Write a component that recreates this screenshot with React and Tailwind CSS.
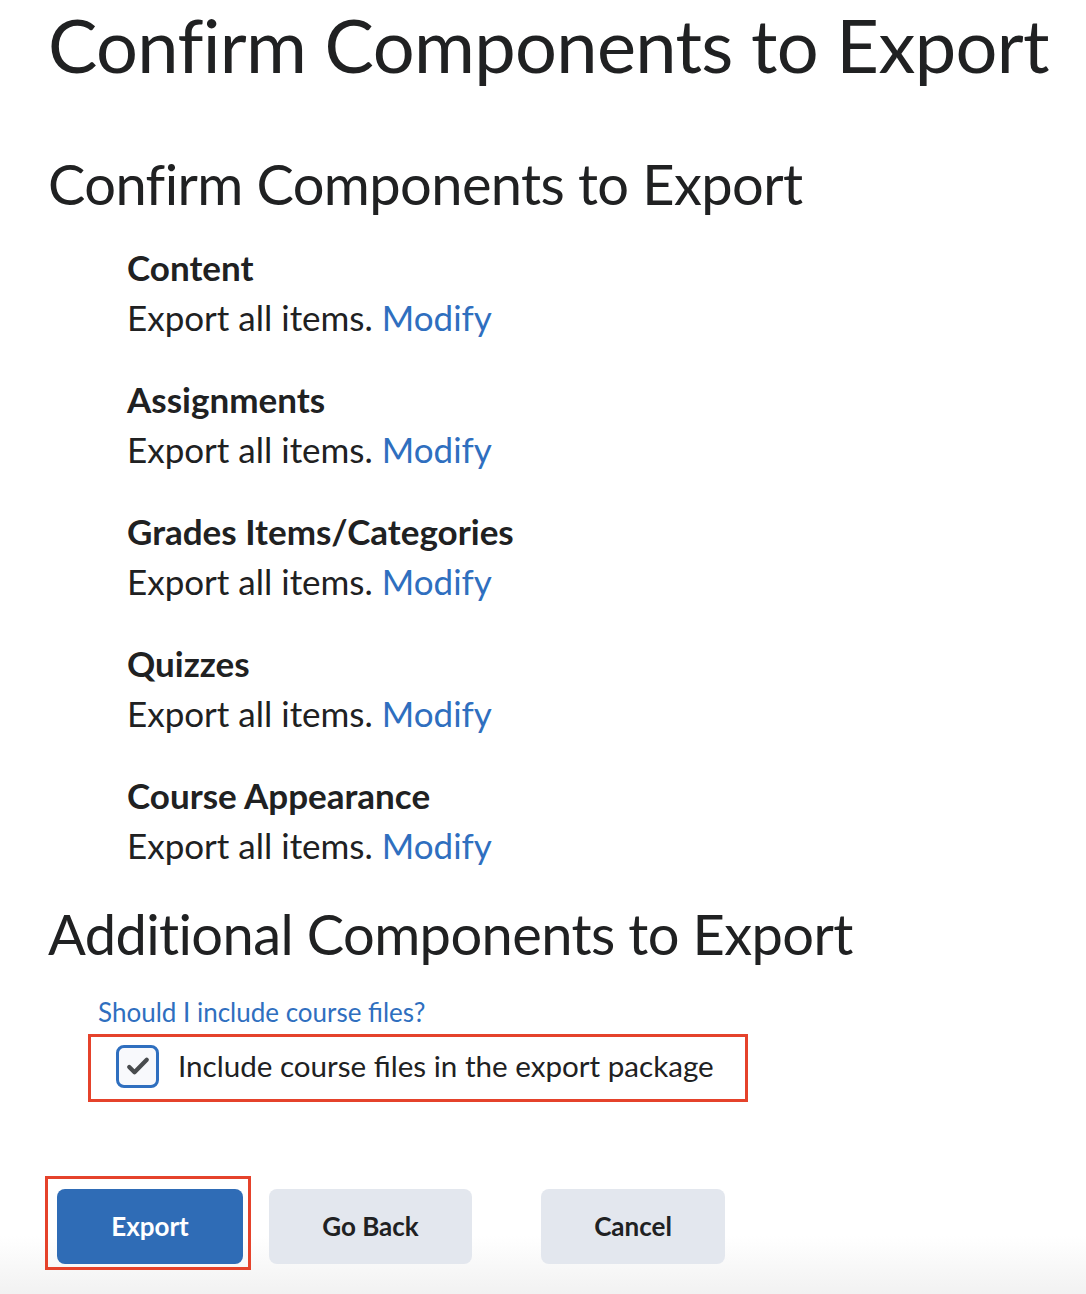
import React from "react";

const components = [
  "Content",
  "Assignments",
  "Grades Items/Categories",
  "Quizzes",
  "Course Appearance",
];

function ComponentRow({ name }) {
  return (
    <div className="flex flex-col">
      <p className="text-[35px] font-bold leading-[40px] text-[#202122]">{name}</p>
      <p className="mt-[10px] text-[35px] leading-[40px] text-[#202122]">
        Export all items. <a className="text-[#2f6fbf]">Modify</a>
      </p>
    </div>
  );
}

export default function App() {
  return (
    <div
      className="h-[1294px] w-[1086px] overflow-hidden bg-white"
      style={{ fontFamily: "Lato, 'Noto Sans', sans-serif" }}
    >
      <div className="px-[48px]">
        <h1 className="whitespace-nowrap pt-[1px] text-[74px] font-normal leading-[88px] tracking-[-0.65px] text-[#202122]">
          Confirm Components to Export
        </h1>

        <h2 className="mt-[63px] whitespace-nowrap text-[56px] font-normal leading-[64px] tracking-[-0.6px] text-[#202122]">
          Confirm Components to Export
        </h2>

        <div className="mt-[31px] flex flex-col gap-[42px] pl-[79px]">
          {components.map((c) => (
            <ComponentRow key={c} name={c} />
          ))}
        </div>

        <h2 className="mt-[37px] whitespace-nowrap text-[56px] font-normal leading-[64px] tracking-[-0.6px] text-[#202122]">
          Additional Components to Export
        </h2>

        <div className="mt-[30px] pl-[50px]">
          <a className="text-[26px] leading-[32px] text-[#2f6fbf]">Should I include course files?</a>
        </div>

        <div className="mt-[6px] ml-[40px] flex h-[68px] w-[660px] items-center gap-[19px] border-[3px] border-[#e5422b] pb-[4px] pl-[25px]">
          <span className="flex h-[43px] w-[43px] items-center justify-center rounded-[8px] border-[3px] border-[#2f6fbf] bg-[#f8f9fc]">
            <svg width="30" height="30" viewBox="0 0 24 24" fill="none">
              <path
                d="M5 12.8l4.2 4.2L19 7"
                stroke="#494c4e"
                strokeWidth="3.4"
                strokeLinecap="round"
                strokeLinejoin="round"
              />
            </svg>
          </span>
          <span className="text-[29.6px] leading-[36px] text-[#202122]">
            Include course files in the export package
          </span>
        </div>
      </div>

      <div className="mt-[74px] flex h-[200px] items-start bg-gradient-to-b from-white from-[30%] to-[#efefef] to-[65%] pl-[45px]">
        <div className="border-[3px] border-[#e5422b] pb-[3px] pl-[9px] pr-[5px] pt-[10px]">
          <button className="flex h-[75px] w-[186px] items-center justify-center rounded-[8px] bg-[#2f6cb6] text-[26px] font-bold text-white">
            Export
          </button>
        </div>
        <button className="ml-[18px] mt-[13px] flex h-[75px] w-[203px] items-center justify-center rounded-[8px] bg-[#e3e7ee] text-[26px] font-bold text-[#202122]">
          Go Back
        </button>
        <button className="ml-[69px] mt-[13px] flex h-[75px] w-[184px] items-center justify-center rounded-[8px] bg-[#e3e7ee] text-[26px] font-bold text-[#202122]">
          Cancel
        </button>
      </div>
    </div>
  );
}
